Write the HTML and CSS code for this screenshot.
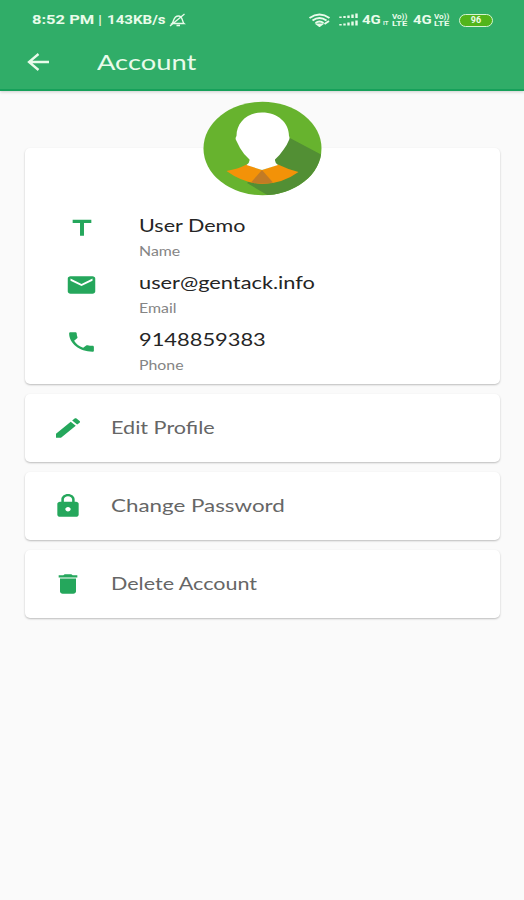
FILE: index.html
```html
<!DOCTYPE html>
<html lang="en">
<head>
<meta charset="utf-8">
<title>Account</title>
<link rel="stylesheet" href="styles.css">
</head>
<body>
<header class="top">
  <div class="status">
    <span class="time"><span class="wide">8:52 PM</span></span>
    <span class="bar"><span class="wide">|</span></span>
    <span class="speed"><span class="wide">143KB/s</span></span>
    <svg class="bell" width="18" height="14" viewBox="0 0 18 14" fill="none" stroke="currentColor" stroke-width="1.3"><path d="M3 10.5C5 9 4 3 9.500 3C14 3 13 9 15 10.500ZM7.500 12.500H11M1 13L15.500 1"/></svg>
    <svg class="wifi" width="24" height="14" viewBox="0 0 24 14" fill="none" stroke="currentColor" stroke-width="2"><path d="M1.500 5Q11.500-2 21.500 5M4.500 7.500Q11.500 2.500 18.500 7.500M7.500 10Q11.500 7 15.500 10"/><path d="M9.500 11.500L11.500 13L13.500 11.500ZM16.500 11L21 8"/></svg>
    <svg class="signal" width="21" height="14" viewBox="0 0 21 14" fill="none" stroke="currentColor" stroke-width="2.400"><path d="M2.500 5V3.500M6.500 5V3M10.500 5V2.500M14.500 5V1.500M18.500 5V.5M2.500 12.500V11M6.500 12.500V10.500M10.500 12.500V9.500M14.500 12.500V8.500M18.500 12.500V7.500"/></svg>
    <span class="net"><span class="wide">4G</span></span>
    <span class="arrows">IT</span>
    <span class="volte volte-a"><span class="wide">Vo))</span><span class="wide lte">LTE</span></span>
    <span class="net net-b"><span class="wide">4G</span></span>
    <span class="volte"><span class="wide">Vo))</span><span class="wide lte">LTE</span></span>
    <span class="battery"><span>96</span></span>
  </div>
  <div class="toolbar">
    <svg class="back" width="22" height="18" viewBox="0 0 22 18" fill="none" stroke="currentColor" stroke-width="2.300"><path d="M22 9H2M11.500 1L2 9L11.500 17"/></svg>
    <h1 class="title"><span class="wide">Account</span></h1>
  </div>
</header>
<main class="content">
  <section class="card profile">
    <svg class="avatar" width="119" height="95" viewBox="0 0 119 95">
      <defs><clipPath id="disc"><ellipse cx="59.500" cy="47.500" rx="59" ry="46.800"/></clipPath></defs>
      <g clip-path="url(#disc)">
        <path fill="#67b32e" d="M0 0H119V95H0Z"/>
        <path fill="#528f34" d="M85 36L119 54V95H66L44 82L70 57Z"/>
      </g>
      <path fill="#f39208" d="M23.500 70Q35 68 43.500 63.500L59 69L75 63.500Q84 68 95.500 71Q79 83 59 83Q40 82 23.500 70Z"/>
      <path fill="#c27b25" d="M59 69L70 81.500Q59 84 48 81.500Z"/>
      <path fill="#fff" d="M59 11.500C75 11.500 86 22 86 35Q87 37 86 39Q84 44 81 48Q77 54 72 58.500Q71.500 61 75 64L59 69L43.500 64Q47 61 46.500 58.500Q41 54 37 47L33 39Q32 37 33.500 35C33.500 22 44 11.500 59 11.500Z"/>
    </svg>
    <div class="field">
      <svg class="icon" width="28" height="23" viewBox="0 0 24 24" preserveAspectRatio="none"><path d="M4 4V7.200H10.300V20.500H13.700V7.200H20V4Z"/></svg>
      <div class="info"><div class="value w-name"><span class="wide">User Demo</span></div><div class="label"><span class="wide">Name</span></div></div>
    </div>
    <div class="field">
      <svg class="icon" width="33" height="26" viewBox="0 0 24 24" preserveAspectRatio="none"><path d="M20 4H4c-1.100 0-1.990.9-1.990 2L2 18c0 1.100.9 2 2 2h16c1.100 0 2-.9 2-2V6c0-1.100-.9-2-2-2zm0 4l-8 5-8-5V6l8 5 8-5v2z"/></svg>
      <div class="info"><div class="value w-mail"><span class="wide">user@gentack.info</span></div><div class="label"><span class="wide">Email</span></div></div>
    </div>
    <div class="field">
      <svg class="icon" width="33" height="26" viewBox="0 0 24 24" preserveAspectRatio="none"><path d="M6.620 10.790c1.440 2.830 3.760 5.140 6.590 6.590l2.200-2.200c.27-.27.67-.36 1.020-.24 1.120.37 2.330.57 3.570.57.550 0 1 .45 1 1V20c0 .55-.45 1-1 1-9.390 0-17-7.610-17-17 0-.55.45-1 1-1h3.500c.55 0 1 .45 1 1 0 1.250.2 2.450.57 3.570.11.350.03.740-.25 1.020l-2.200 2.200z"/></svg>
      <div class="info"><div class="value w-phone"><span class="wide">9148859383</span></div><div class="label"><span class="wide">Phone</span></div></div>
    </div>
  </section>
  <section class="card action">
    <svg class="icon" width="32" height="26" viewBox="0 0 24 24" preserveAspectRatio="none"><path d="M3 17.250V21h3.750L17.810 9.940l-3.750-3.750L3 17.250zM20.710 7.040c.39-.39.39-1.020 0-1.410l-2.340-2.340c-.39-.39-1.020-.39-1.410 0l-1.830 1.830 3.750 3.750 1.830-1.830z"/></svg>
    <span class="item w-edit"><span class="wide">Edit Profile</span></span>
  </section>
  <section class="card action">
    <svg class="icon" width="32" height="26" viewBox="0 0 24 24" preserveAspectRatio="none"><path d="M18 8h-1V6c0-2.760-2.240-5-5-5S7 3.240 7 6v2H6c-1.100 0-2 .9-2 2v10c0 1.100.9 2 2 2h12c1.100 0 2-.9 2-2V10c0-1.100-.9-2-2-2zm-6 9c-1.100 0-2-.9-2-2s.9-2 2-2 2 .9 2 2-.9 2-2 2zm3.100-9H8.900V6c0-1.710 1.390-3.100 3.100-3.100s3.100 1.390 3.100 3.100v2z"/></svg>
    <span class="item w-pass"><span class="wide">Change Password</span></span>
  </section>
  <section class="card action">
    <svg class="icon" width="32" height="26" viewBox="0 0 24 24" preserveAspectRatio="none"><path d="M6 19c0 1.100.9 2 2 2h8c1.100 0 2-.9 2-2V7H6v12zM19 4h-3.500l-1-1h-5l-1 1H5v2h14V4z"/></svg>
    <span class="item w-del"><span class="wide">Delete Account</span></span>
  </section>
</main>
</body>
</html>
```
FILE: styles.css
```css
* { box-sizing: border-box; }
body {
  margin: 0;
  height: 900px;
  overflow: hidden;
  background: #fafafa;
  font-family: Lato, "Noto Sans", sans-serif;
}
svg { display: block; flex: none; }
.wide {
  display: inline-block;
  white-space: nowrap;
  transform: scaleX(var(--sx, 1.27));
  transform-origin: left center;
}
.top {
  height: 91px;
  background: #30ad68;
  border-bottom: 2px solid #16a05a;
  box-shadow: 0 1px 3px rgba(0, 0, 0, .18);
  color: #e9fbea;
}
.status {
  display: flex;
  align-items: center;
  height: 40px;
  padding-left: 32px;
  font: bold 13px/40px Roboto, sans-serif;
}
.status > * { flex: none; }
.time { width: 66px; }
.bar { width: 9px; font-weight: normal; }
.speed { width: 62px; --sx: 1.16; }
.bell { width: 18px; }
.wifi { margin-left: 121px; }
.signal { margin-left: 6px; }
.net { width: 21px; margin-left: 3px; --sx: 1.15; }
.net-b { margin-left: 3px; }
.arrows { width: 7px; font-size: 6px; padding-top: 5px; }
.volte {
  display: flex;
  flex-direction: column;
  align-items: flex-start;
  width: 18px;
  font-size: 7px;
  line-height: 8px;
  --sx: 1.15;
}
.lte { --sx: 1.35; margin-top: -1px; }
.volte-a { margin-left: 2px; }
.battery {
  display: flex;
  align-items: center;
  justify-content: center;
  width: 34px;
  height: 13px;
  margin-left: 7px;
  border: 1.5px solid #d5f5d0;
  border-radius: 7px;
  background: #52b51b;
  font-size: 9px;
  line-height: 9px;
}
.toolbar {
  display: flex;
  align-items: center;
  height: 44px;
  padding-left: 27px;
}
.title {
  margin: 0 0 0 48px;
  font-size: 21px;
  font-weight: 400;
  line-height: 44px;
  --sx: 1.3;
}
.content {
  display: flex;
  flex-direction: column;
  gap: 10px;
  padding: 57px 24px 0 25px;
}
.card {
  position: relative;
  border-radius: 5px;
  background: #fff;
  box-shadow: 0 1px 2px rgba(0, 0, 0, .25);
}
.profile { height: 235.5px; padding-top: 66px; }
.avatar {
  position: absolute;
  left: 178px;
  top: -47px;
}
.field {
  display: flex;
  align-items: flex-start;
  height: 57px;
  padding-left: 40px;
}
.field .icon { width: 33px; margin-top: 1px; }
.field:nth-of-type(1) .icon { width: 28px; margin: 2px 2px 0 3px; }
.icon { fill: #25a75c; }
.info { margin-left: 41px; }
.value {
  color: #252525;
  font-size: 16.5px;
  line-height: 24px;
}
.w-name { --sx: 1.305; }
.w-mail { --sx: 1.32; }
.w-phone { --sx: 1.325; }
.label {
  margin-top: 3px;
  color: #858585;
  font-size: 12.500px;
  line-height: 22px;
}
.action {
  display: flex;
  align-items: center;
  height: 68px;
  padding-left: 27px;
}
.item {
  margin-left: 27px;
  color: #666;
  font-size: 16.5px;
}
.w-edit { --sx: 1.31; }
.w-pass { --sx: 1.355; }
.w-del { --sx: 1.305; }
```
